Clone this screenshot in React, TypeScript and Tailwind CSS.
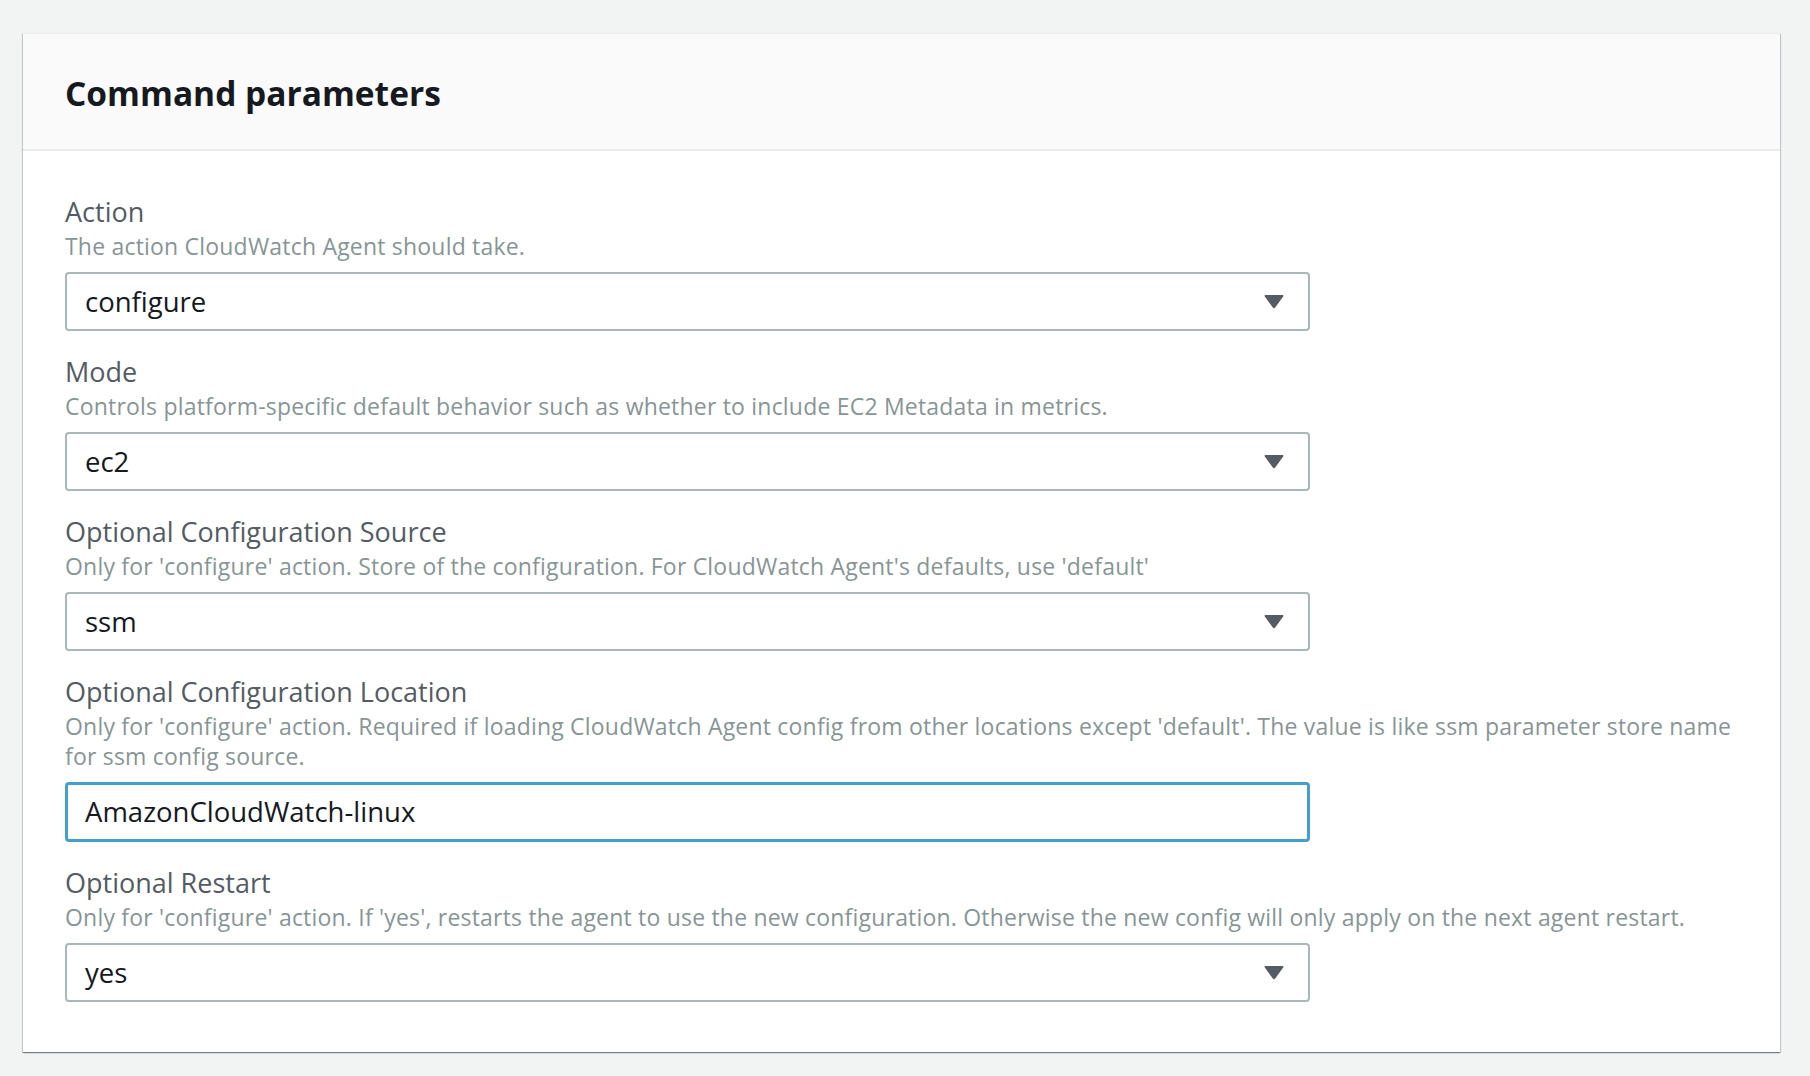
import React from "react";

const font = { fontFamily: '"Open Sans", "Noto Sans", Arial, sans-serif' };

function Arrow() {
  return (
    <svg width="20" height="15" viewBox="0 0 20 15" className="shrink-0">
      <path d="M1.5 1 H18.5 Q20 1 19.2 2.4 L11.2 13.6 Q10 15 8.8 13.6 L0.8 2.4 Q0 1 1.5 1 Z" fill="#545b64" />
    </svg>
  );
}

function SelectBox({ value }: { value: string }) {
  return (
    <div className="w-[1245px] h-[59px] border-2 border-[#aab7b8] rounded-[4px] bg-white flex items-center justify-between pl-[18px] pr-[24px]">
      <span className="text-[27.5px] text-[#16191f] leading-none">{value}</span>
      <Arrow />
    </div>
  );
}

function InputBox({ value }: { value: string }) {
  return (
    <div className="w-[1245px] h-[60px] border-[3px] border-[#44a0ca] rounded-[4px] bg-white flex items-center pl-[17px]">
      <span className="text-[27.5px] text-[#16191f] leading-none">{value}</span>
    </div>
  );
}

function Field({
  label,
  desc,
  children,
}: {
  label: string;
  desc: string;
  children: React.ReactNode;
}) {
  return (
    <div className="flex flex-col">
      <div className="text-[27px] leading-[38px] text-[#545b64]">{label}</div>
      <div className="text-[23px] leading-[30px] tracking-[0.2px] text-[#879596]">{desc}</div>
      <div className="mt-[11px]">{children}</div>
    </div>
  );
}

export default function App() {
  return (
    <div className="w-[1810px] h-[1076px] bg-[#f2f3f3] pt-[33px] pl-[23px] pr-[30px]" style={font}>
      <div className="bg-white border-t border-[#eaeded] shadow-[0_1px_1px_0_rgba(0,28,36,0.35),1px_1px_1px_0_rgba(0,28,36,0.15),-1px_1px_1px_0_rgba(0,28,36,0.15)]">
        <div className="bg-[#fafafa] h-[117px] border-b-2 border-[#eaeded] flex items-center pl-[42px] pt-[4px]">
          <h2 className="text-[33.5px] font-bold text-[#16191f] leading-none">Command parameters</h2>
        </div>
        <div className="pl-[42px] pr-[42px] pt-[42px] pb-[50px] flex flex-col gap-[22px]">
          <Field label="Action" desc="The action CloudWatch Agent should take.">
            <SelectBox value="configure" />
          </Field>
          <Field
            label="Mode"
            desc="Controls platform-specific default behavior such as whether to include EC2 Metadata in metrics."
          >
            <SelectBox value="ec2" />
          </Field>
          <Field
            label="Optional Configuration Source"
            desc="Only for 'configure' action. Store of the configuration. For CloudWatch Agent's defaults, use 'default'"
          >
            <SelectBox value="ssm" />
          </Field>
          <Field
            label="Optional Configuration Location"
            desc="Only for 'configure' action. Required if loading CloudWatch Agent config from other locations except 'default'. The value is like ssm parameter store name for ssm config source."
          >
            <InputBox value="AmazonCloudWatch-linux" />
          </Field>
          <Field
            label="Optional Restart"
            desc="Only for 'configure' action. If 'yes', restarts the agent to use the new configuration. Otherwise the new config will only apply on the next agent restart."
          >
            <SelectBox value="yes" />
          </Field>
        </div>
      </div>
    </div>
  );
}
